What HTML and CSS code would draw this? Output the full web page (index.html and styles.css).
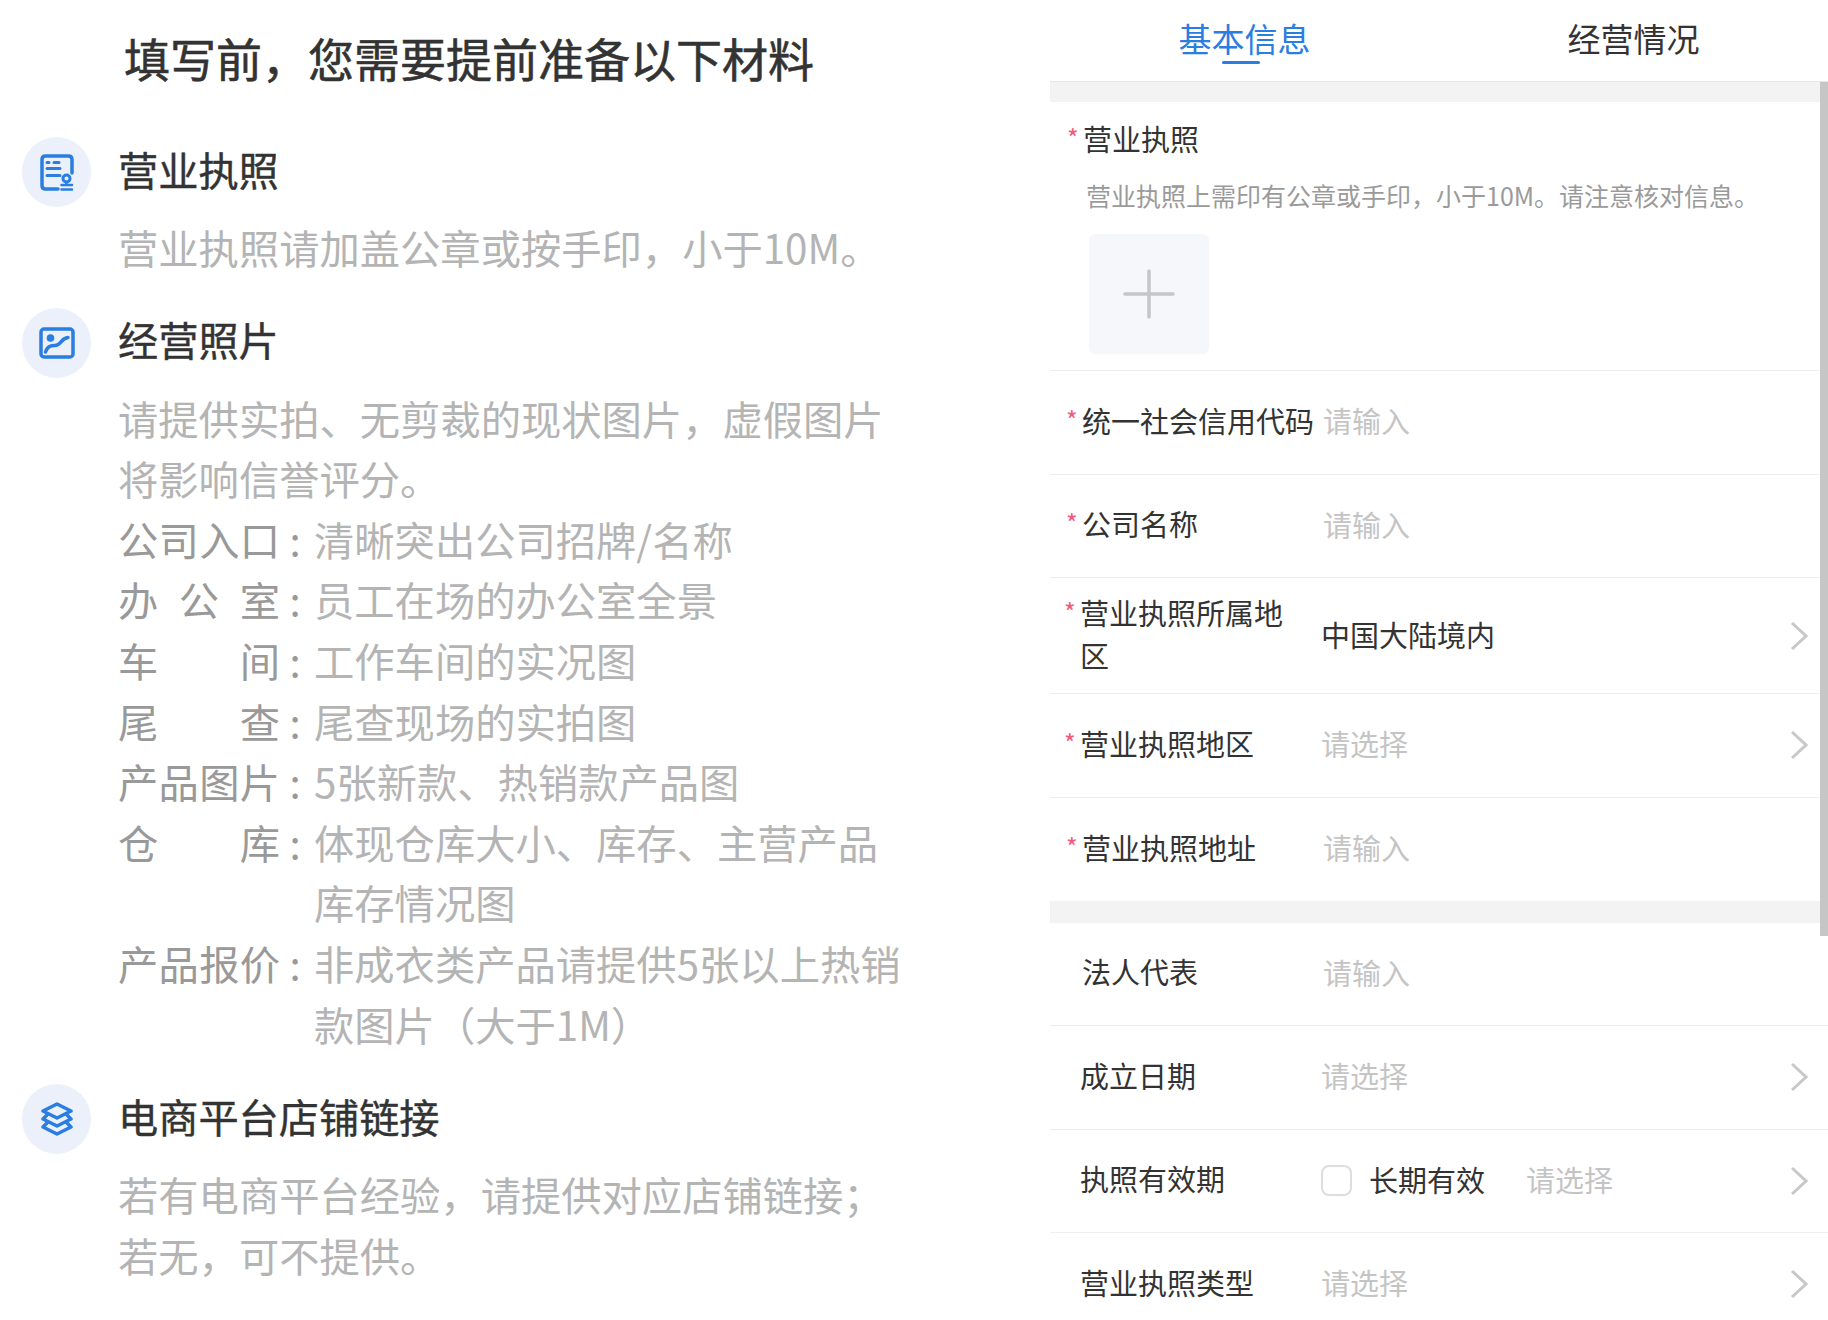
FILE: index.html
```html
<!DOCTYPE html>
<html lang="zh-CN">
<head>
    <meta charset="UTF-8">
    <meta name="viewport" content="width=device-width, initial-scale=1.0">
    <title>填写资料</title>
    <link rel="stylesheet" href="styles.css">
</head>
<body>
    <div class="page">
        <div class="guide">
            <h1 class="guide-title">填写前，您需要提前准备以下材料</h1>

            <div class="section">
                <div class="section-head">
                    <div class="section-icon">
                        <svg width="34" height="37" viewBox="0 0 34 37" fill="none" stroke="#2a7de1" stroke-width="3.500" stroke-linecap="round">
                            <path d="M18 35H5.500Q2 35 2 31.500V5.500Q2 2 5.500 2H28.500Q32 2 32 5.500V19"/>
                            <path d="M7 8.500H9M14 8.500H19" stroke-width="3"/>
                            <path d="M7 14.500H20M7 21.500H20" stroke-width="3"/>
                            <circle cx="26.500" cy="24.500" r="3.500" stroke-width="3"/>
                            <path d="M26.500 28V30M21.500 31H32M21.500 35.500H32" stroke-width="2.500"/>
                        </svg>
                    </div>
                    <h2 class="section-title">营业执照</h2>
                </div>
                <div class="section-body">
                    <p>营业执照请加盖公章或按手印，小于10M。</p>
                </div>
            </div>

            <div class="section">
                <div class="section-head">
                    <div class="section-icon">
                        <svg width="36" height="32" viewBox="0 0 36 32" fill="none" stroke="#2a7de1" stroke-width="3.500" stroke-linecap="round">
                            <rect x="2" y="2" width="32" height="28" rx="3"/>
                            <circle cx="11.500" cy="11" r="3.800" fill="#2a7de1" stroke="none"/>
                            <path d="M6.500 25C8.500 19 12 18.500 16 18.500C22 18.500 21.500 11.500 29 10.500"/>
                        </svg>
                    </div>
                    <h2 class="section-title">经营照片</h2>
                </div>
                <div class="section-body">
                    <p>请提供实拍、无剪裁的现状图片，虚假图片将影响信誉评分。</p>
                    <div class="material"><span class="material-name">公司入口</span><span class="material-sep">:</span><span class="material-text">清晰突出公司招牌/名称</span></div>
                    <div class="material"><span class="material-name">办公室</span><span class="material-sep">:</span><span class="material-text">员工在场的办公室全景</span></div>
                    <div class="material"><span class="material-name">车间</span><span class="material-sep">:</span><span class="material-text">工作车间的实况图</span></div>
                    <div class="material"><span class="material-name">尾查</span><span class="material-sep">:</span><span class="material-text">尾查现场的实拍图</span></div>
                    <div class="material"><span class="material-name">产品图片</span><span class="material-sep">:</span><span class="material-text">5张新款、热销款产品图</span></div>
                    <div class="material"><span class="material-name">仓库</span><span class="material-sep">:</span><span class="material-text">体现仓库大小、库存、主营产品库存情况图</span></div>
                    <div class="material"><span class="material-name">产品报价</span><span class="material-sep">:</span><span class="material-text">非成衣类产品请提供5张以上热销款图片（大于1M）</span></div>
                </div>
            </div>

            <div class="section">
                <div class="section-head">
                    <div class="section-icon">
                        <svg width="32" height="34" viewBox="0 0 32 34" fill="none" stroke="#2a7de1" stroke-width="3.500" stroke-linejoin="round" stroke-linecap="round">
                            <path d="M16 2L30 9L16 16L2 9Z"/>
                            <path d="M6.500 12.500L2 17L16 24L30 17L25.500 12.500"/>
                            <path d="M6.500 20.500L2 25L16 32L30 25L25.500 20.500"/>
                        </svg>
                    </div>
                    <h2 class="section-title">电商平台店铺链接</h2>
                </div>
                <div class="section-body">
                    <p>若有电商平台经验，请提供对应店铺链接；若无，可不提供。</p>
                </div>
            </div>
        </div>

        <div class="form-panel">
            <div class="tabs">
                <div class="tab active">基本信息</div>
                <div class="tab">经营情况</div>
            </div>
            <div class="band band-top"></div>

            <div class="upload-row">
                <div class="upload-label required">营业执照</div>
                <p class="upload-hint">营业执照上需印有公章或手印，小于10M。请注意核对信息。</p>
                <div class="upload-box">
                    <svg width="52" height="50" viewBox="0 0 52 50" fill="none" stroke="#c4c6cb" stroke-width="3.500" stroke-linecap="round">
                        <path d="M2 25H50M26 2V48"/>
                    </svg>
                </div>
            </div>

            <div class="row row-input">
                <div class="label required">统一社会信用代码</div>
                <div class="placeholder">请输入</div>
            </div>
            <div class="row row-input">
                <div class="label required">公司名称</div>
                <div class="placeholder">请输入</div>
            </div>
            <div class="row row-tall">
                <div class="label required">营业执照所属地区</div>
                <div class="value">中国大陆境内</div>
                <svg class="chevron" width="18" height="30" viewBox="0 0 18 30" fill="none"><path d="M2 2L16 15L2 28"/></svg>
            </div>
            <div class="row">
                <div class="label required">营业执照地区</div>
                <div class="placeholder">请选择</div>
                <svg class="chevron" width="18" height="30" viewBox="0 0 18 30" fill="none"><path d="M2 2L16 15L2 28"/></svg>
            </div>
            <div class="row row-input row-last">
                <div class="label required">营业执照地址</div>
                <div class="placeholder">请输入</div>
            </div>
            <div class="band band-mid"></div>

            <div class="row row-input">
                <div class="label">法人代表</div>
                <div class="placeholder">请输入</div>
            </div>
            <div class="row">
                <div class="label">成立日期</div>
                <div class="placeholder">请选择</div>
                <svg class="chevron" width="18" height="30" viewBox="0 0 18 30" fill="none"><path d="M2 2L16 15L2 28"/></svg>
            </div>
            <div class="row">
                <div class="label">执照有效期</div>
                <div class="checkbox"></div>
                <div class="value check-text">长期有效</div>
                <div class="placeholder date-placeholder">请选择</div>
                <svg class="chevron" width="18" height="30" viewBox="0 0 18 30" fill="none"><path d="M2 2L16 15L2 28"/></svg>
            </div>
            <div class="row">
                <div class="label">营业执照类型</div>
                <div class="placeholder">请选择</div>
                <svg class="chevron" width="18" height="30" viewBox="0 0 18 30" fill="none"><path d="M2 2L16 15L2 28"/></svg>
            </div>

            <div class="scrollbar"></div>
        </div>
    </div>
</body>
</html>
```

FILE: styles.css
```css
* {
    margin: 0;
    padding: 0;
    box-sizing: border-box;
    font-family: "Noto Sans CJK SC", "Noto Sans", sans-serif;
}

html, body {
    height: 1320px;
    overflow: hidden;
    background-color: #fff;
}

.page {
    display: flex;
    height: 1320px;
}

/* left column */
.guide {
    width: 1050px;
    flex-shrink: 0;
    padding: 27px 0 0 22px;
}

.guide-title {
    padding-left: 102px;
    margin-bottom: 50px;
    font-size: 46px;
    line-height: 60px;
    font-weight: 400;
    -webkit-text-stroke: 0.6px #333;
    color: #333;
}

.section {
    margin-bottom: 30px;
}

.section-head {
    display: flex;
    align-items: center;
    gap: 27px;
}

.section-icon {
    width: 69px;
    height: 70px;
    border-radius: 50%;
    background-color: #ebf0fb;
    display: flex;
    align-items: center;
    justify-content: center;
}

.section-title {
    padding-bottom: 8px;
    font-size: 40.2px;
    font-weight: 400;
    -webkit-text-stroke: 0.4px #333;
    color: #333;
}

.section-body {
    width: 887px;
    margin-top: 10px;
    padding-left: 96px;
    font-size: 40.3px;
    line-height: 60.6px;
    color: #b4b4b4;
}

.material {
    display: flex;
}

.material-name {
    width: 162px;
    flex-shrink: 0;
    text-align-last: justify;
    color: #999;
}

.material-sep {
    width: 34px;
    flex-shrink: 0;
    padding-right: 4px;
    text-align: center;
    color: #999;
}

/* right column */
.form-panel {
    position: relative;
    flex: 1;
    min-width: 0;
    overflow: hidden;
}

.tabs {
    display: flex;
    height: 82px;
    border-bottom: 1px solid #e6e6e6;
}

.tab {
    position: relative;
    flex: 1;
    padding-top: 13px;
    text-align: center;
    font-size: 33px;
    line-height: 50px;
    color: #333;
}

.tab.active {
    color: #2a7de1;
}

.tab.active::after {
    content: "";
    position: absolute;
    left: 172px;
    top: 61px;
    width: 38px;
    height: 3px;
    border-radius: 2px;
    background-color: #2a7de1;
}

.band {
    background-color: #f3f3f3;
}

.band-top {
    height: 20px;
}

.band-mid {
    height: 21.5px;
}

.upload-row {
    height: 269px;
    padding: 15px 0 0 33px;
    border-bottom: 1px solid #eee;
}

.upload-label {
    position: relative;
    font-size: 29px;
    line-height: 42px;
    color: #333;
}

.upload-hint {
    margin-top: 16px;
    padding-left: 3px;
    font-size: 25px;
    line-height: 40px;
    color: #9a9a9a;
}

.upload-box {
    width: 120px;
    height: 120px;
    margin: 19px 0 0 6px;
    border-radius: 6px;
    background-color: #f6f7fa;
    display: flex;
    align-items: center;
    justify-content: center;
}

.row {
    display: flex;
    align-items: center;
    height: 103.5px;
    padding: 0 20px 0 30px;
    border-bottom: 1px solid #eee;
}

.row-input {
    padding-left: 32px;
}

.row-tall {
    height: 116px;
}

.row-last {
    border-bottom: none;
}

.label {
    position: relative;
    width: 241px;
    flex-shrink: 0;
    padding-bottom: 4px;
    font-size: 29px;
    line-height: 43px;
    color: #333;
}

.row-tall .label {
    width: 220px;
    margin-right: 21px;
}

.required::before {
    content: "*";
    position: absolute;
    left: -16px;
    top: 5px;
    font-size: 25px;
    line-height: 30px;
    color: #f4597a;
}

.placeholder, .value {
    padding-bottom: 4px;
    font-size: 29px;
    line-height: 42px;
}

.placeholder {
    color: #c4c4c4;
}

.value {
    color: #333;
}

.chevron {
    margin-left: auto;
}

.chevron path {
    stroke: #c8c8c8;
    stroke-width: 3;
}

.checkbox {
    width: 31px;
    height: 31px;
    border: 2px solid #ddd;
    border-radius: 8px;
}

.check-text {
    margin-left: 17px;
}

.date-placeholder {
    margin-left: 41px;
}

.scrollbar {
    position: absolute;
    top: 82px;
    right: 0;
    width: 8px;
    height: 854px;
    background-color: #c6c6c6;
}
```
